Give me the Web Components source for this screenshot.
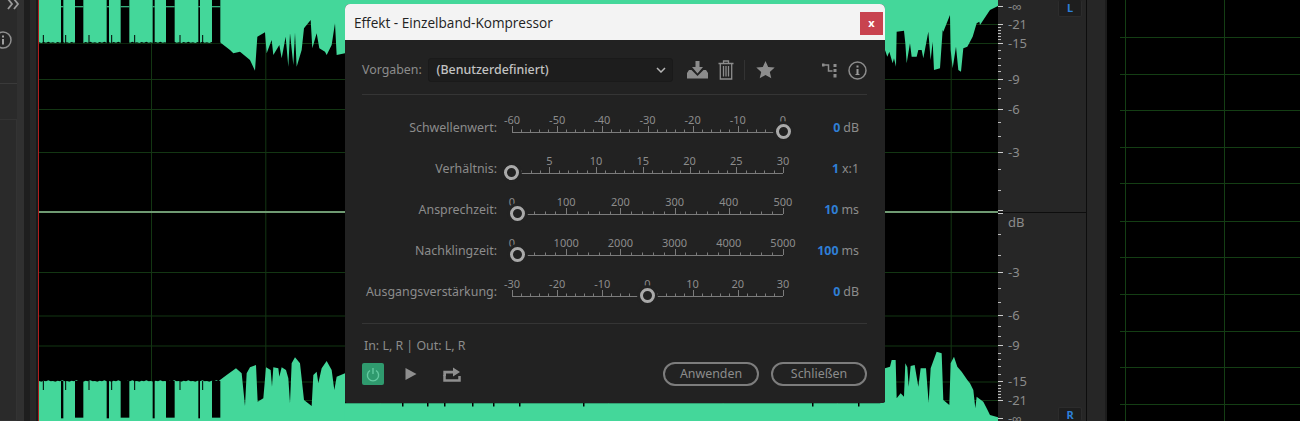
<!DOCTYPE html>
<html lang="de">
<head>
<meta charset="utf-8">
<title>Effekt - Einzelband-Kompressor</title>
<style>
  html, body { margin: 0; height: 100%; background: #000; overflow: hidden; }
</style>
</head>
<body>
<audition-view>
  <side-rail></side-rail>
  <wave-view></wave-view>
  <db-ruler></db-ruler>
  <rail-split></rail-split>
  <empty-track></empty-track>
  <effect-dialog title="Effekt - Einzelband-Kompressor">
    <fx-slider label="Schwellenwert:" value="0" unit="dB" scale="-60,-50,-40,-30,-20,-10,0" thumb="271"></fx-slider>
    <fx-slider label="Verhältnis:" value="1" unit="x:1" scale="5,10,15,20,25,30" lead="37.4" thumb="-1"></fx-slider>
    <fx-slider label="Ansprechzeit:" value="10" unit="ms" scale="0,100,200,300,400,500" thumb="5.4"></fx-slider>
    <fx-slider label="Nachklingzeit:" value="100" unit="ms" scale="0,1000,2000,3000,4000,5000" thumb="5.4"></fx-slider>
    <fx-slider label="Ausgangsverstärkung:" value="0" unit="dB" scale="-30,-20,-10,0,10,20,30" thumb="135.5"></fx-slider>
  </effect-dialog>
</audition-view>

<script>
class AuditionView extends HTMLElement {
  constructor() {
    super();
    this.attachShadow({mode: "open"}).innerHTML = `
    <style>
      :host { display: flex; position: relative; width: 1300px; height: 421px; overflow: hidden; background: #000; }
    </style>
    <slot></slot>`;
  }
}

class SideRail extends HTMLElement {
  constructor() {
    super();
    this.attachShadow({mode: "open"}).innerHTML = `
    <style>
      :host { display: flex; flex: 0 0 38px; height: 421px; background: #262626; }
      .panel { flex: 0 0 17px; display: flex; flex-direction: column; background: #2a2a2a; overflow: hidden; }
      .tools { height: 84px; box-sizing: border-box; border-bottom: 1px solid #3a3a3a; position: relative; }
      .tools svg { display: block; }
      .box { margin-top: 35px; flex: 1; border: 1px solid #333; border-left: 0; }
      .s1 { flex: 0 0 7px; background: #303030; }
      .s2 { flex: 0 0 6px; background: #1e1e1e; }
      .s3 { flex: 0 0 6px; background: #282828; }
      .s4 { flex: 0 0 2px; background: #1b1b1b; }
      .over { position: absolute; left: 0; top: 0; }
    </style>
    <div class="panel"><div class="tools"></div><div class="box"></div></div>
    <div class="s1"></div><div class="s2"></div><div class="s3"></div><div class="s4"></div>
    <svg class="over" width="38" height="60" viewBox="0 0 38 60">
      <path d="M8 -1l4 5-4 5M14 -1l4 5-4 5" fill="none" stroke="#9a9a9a" stroke-width="1.8"/>
      <circle cx="3" cy="40" r="8" fill="#262626" stroke="#8f8f8f" stroke-width="1.5"/>
      <rect x="2" y="39" width="2" height="5.5" fill="#a0a0a0"/><rect x="2" y="35.5" width="2" height="2" fill="#a0a0a0"/>
    </svg>`;
  }
}

// coordinates below come from the 3x crops, hence the scale(1/3)
const TOP_LEFT = "660,127 690,150 700,160 720,155 750,180 765,212 772,110 795,97 800,160 815,120 820,165 838,135 845,175 857,110 865,200 870,100 880,195 885,98 890,200 905,150 912,85 932,60 937,145 950,100 958,145 975,155 980,165 995,135 1005,70 1010,165 1035,160";
const TOP_RIGHT = "2655,150 2662,170 2668,155 2678,190 2682,175 2688,200 2690,95 2712,92 2716,130 2720,190 2730,130 2735,170 2750,170 2755,150 2765,150 2770,175 2785,95 2792,180 2798,125 2802,210 2820,205 2828,90 2830,95 2850,45 2852,150 2858,205 2868,140 2875,210 2883,215 2890,145 2902,140 2918,110 2930,70 2938,65 2940,75 2970,30 2994,18";
const BOT_LEFT = "660,300 680,285 708,265 725,280 735,378 740,280 750,262 768,255 773,365 790,355 798,262 812,270 816,320 820,262 835,265 838,290 845,262 858,270 865,295 870,370 875,250 885,232 900,250 912,360 935,378 940,285 950,275 955,310 965,265 980,243 995,270 1003,330 1010,290 1035,280";
const BOT_RIGHT = "2640,370 2655,365 2655,265 2670,260 2675,240 2687,240 2690,355 2702,340 2712,350 2716,250 2722,262 2726,320 2732,258 2744,255 2755,320 2762,265 2778,265 2786,368 2792,265 2810,215 2825,220 2830,360 2848,375 2852,250 2862,230 2872,260 2885,275 2902,300 2910,310 2920,330 2926,385 2930,350 2950,365 2960,385 2970,405 2994,412";
const GAPS = [[183,190],[225,250],[320,327],[362,388],[458,464],[498,524],[595,600],[636,661]];
const SPIKES = [130,197,267,335,404,540,608];

function flatEdge(y) {
  let pts = [];
  for (let x = 117, i = 0; x < 660; x += 7, i++) pts.push(x + "," + (y + [0,2,-1,1,-2,1][i % 6]));
  return pts.join(" ");
}

class WaveView extends HTMLElement {
  constructor() {
    super();
    const vx = [151, 265.3, 379.6, 494, 608.2, 722.6, 836.9, 950.7];
    const hy = [24, 43, 79, 109, 152, 272, 315.5, 345.5, 381.5, 400];
    const gaps = GAPS.map(g => `
      <rect x="${g[0]}" y="0" width="${g[1]-g[0]}" height="130" fill="#000"/>
      <rect x="${g[0]}" y="18" width="${g[1]-g[0]}" height="4" fill="#44d79a" opacity=".8"/>`).join("");
    const gapsLow = GAPS.map(g => `
      <rect x="${g[0]}" y="303" width="${g[1]-g[0]}" height="${g[1]-g[0] > 10 ? 110 : 112}" fill="#000"/>`).join("");
    const spikesTop = SPIKES.map(x => `<rect x="${x-1.5}" y="105" width="3" height="25" fill="#000"/>`).join("");
    const spikesLow = SPIKES.map(x => `<rect x="${x-1.5}" y="303" width="3" height="27" fill="#000"/>`).join("");
    const notches = [402, 427, 444, 472, 493, 519, 583, 812, 858];
    this.attachShadow({mode: "open"}).innerHTML = `
    <style>
      :host { display: block; flex: 0 0 960px; height: 421px; box-sizing: border-box; border-left: 1px solid #b01e1e; }
      svg { display: block; }
    </style>
    <svg width="959" height="421" viewBox="39 0 959 421">
      <rect x="39" y="0" width="959" height="421" fill="#000"/>
      ${vx.map(x => `<rect x="${x}" y="0" width="1" height="421" fill="#133613"/>`).join("")}
      ${hy.map(y => `<rect x="39" y="${y}" width="959" height="1" fill="#133613"/>`).join("")}
      <rect x="39" y="211" width="959" height="2" fill="#6f9a72"/>
      <g transform="scale(.33333)" fill="#44d79a">
        <polygon points="117,0 2994,0 ${TOP_RIGHT.split(" ").reverse().join(" ")} 2655,150 2000,150 1035,150 ${TOP_LEFT.split(" ").reverse().join(" ")} ${flatEdge(127).split(" ").reverse().join(" ")}"/>
        ${gaps}${spikesTop}
      </g>
      <g transform="translate(0,280) scale(.33333)" fill="#44d79a">
        <polygon points="117,423 117,303 ${flatEdge(303)} ${BOT_LEFT} 1035,423"/>
        <polygon points="1035,423 1035,370 2640,370 ${BOT_RIGHT} 2994,423"/>
        ${gapsLow}
        ${spikesLow}
        ${GAPS.filter(g => g[1]-g[0] > 10).map(g => `<rect x="${g[0]}" y="414" width="${g[1]-g[0]}" height="4" fill="#44d79a" opacity=".8"/>`).join("")}
      </g>
      ${notches.map(x => `<rect x="${x}" y="403" width="1.5" height="3.5" fill="#000"/>`).join("")}
    </svg>`;
  }
}

class DbRuler extends HTMLElement {
  constructor() {
    super();
    const marks = [["-∞",6],["-21",24],["-15",43],["-9",79],["-6",109],["-3",152],["dB",222],["-3",272],["-6",315],["-9",345],["-15",381],["-21",400],["-∞",418]];
    const minor = [27,30,33,36,39,50,58,65,71,88,98,122,136,169,190];
    const ticks = [...minor, ...minor.map(y => 424 - y)].map(y => `<rect x="0" y="${y}" width="3" height="1" fill="#bbb"/>`).join("")
      + [6,24,43,79,109,152,210,213,272,315,345,381,400,418].map(y => `<rect x="0" y="${y}" width="5" height="1" fill="#ccc"/>`).join("");
    this.attachShadow({mode: "open"}).innerHTML = `
    <style>
      :host { display: block; position: relative; flex: 0 0 89px; height: 421px; background: #262626; font: 13px "Noto Sans", sans-serif; color: #8b8b8b; }
      :host::after { content: ""; position: absolute; right: 0; top: 0; bottom: 0; width: 1px; background: #0d0d0d; }
      svg { position: absolute; left: 0; top: 0; }
      .split { position: absolute; left: 0; right: 0; top: 212px; height: 1px; background: #0d0d0d; }
      span { position: absolute; left: 10px; transform: translateY(-50%); line-height: 12px; }
      .ch { position: absolute; left: 60px; width: 24px; box-sizing: border-box; background: #1e1e1e; border: 1px solid #2c2c2c; border-radius: 2px; color: #2d7fd8; font-weight: 700; font-size: 11px; line-height: 14px; text-align: center; }
      .l { top: 0; height: 17px; border-top: 0; padding-top: 1px; }
      .r { top: 407px; height: 14px; border-bottom: 0; }
    </style>
    <div class="split"></div>
    <svg width="6" height="421">${ticks}</svg>
    ${marks.map(m => `<span style="top:${m[1]}px">${m[0]}</span>`).join("")}
    <div class="ch l">L</div><div class="ch r">R</div>`;
  }
}

class RailSplit extends HTMLElement {
  constructor() {
    super();
    this.attachShadow({mode: "open"}).innerHTML = `
    <style>
      :host { display: flex; flex: 0 0 33px; height: 421px; }
      div:nth-child(1) { flex: 0 0 13px; background: #1d1d1d; }
      div:nth-child(2) { flex: 0 0 18px; background: #262626; }
      div:nth-child(3) { flex: 0 0 2px; background: #1c1c1c; }
    </style>
    <div></div><div></div><div></div>`;
  }
}

class EmptyTrack extends HTMLElement {
  constructor() {
    super();
    const lines = [37,74,110,147,183,221,257,294,331,367,404].map(y => `<rect x="0" y="${y}" width="180" height="1" fill="#143e14"/>`).join("");
    this.attachShadow({mode: "open"}).innerHTML = `
    <style>:host { display: block; flex: 1; height: 421px; background: #000; } svg { display: block; }</style>
    <svg width="180" height="421">
      <rect x="5" y="0" width="1" height="421" fill="#143e14"/>
      <rect x="104" y="0" width="1" height="421" fill="#143e14"/>
      ${lines}
    </svg>`;
  }
}

class FxSlider extends HTMLElement {
  constructor() {
    super();
    this.attachShadow({mode: "open"});
  }
  connectedCallback() {
    const scale = this.getAttribute("scale").split(",");
    const lead = parseFloat(this.getAttribute("lead") || 0);
    const W = 271;
    let ticks = "";
    const n = lead ? 29 : (scale.length - 1) * 5;
    for (let i = 0; i <= n; i++) {
      const x = Math.round((W / n) * i) + .5;
      const major = lead ? ((i + 1) % 5 === 0 || i === 0) : i % 5 === 0;
      ticks += `<path d="M${x} ${major ? 1 : 4.5}V7"/>`;
    }
    this.shadowRoot.innerHTML = `
    <style>
      :host { display: grid; grid-template-columns: 135px 271px 1fr; column-gap: 15px; height: 41px; box-sizing: border-box; padding-top: 6px; font: 12.4px/16px "Noto Sans", sans-serif; color: #8c8c8c; }
      .label { text-align: right; margin-top: 8px; white-space: nowrap; }
      .track { position: relative; }
      .scale { display: flex; justify-content: space-between; height: 13px; padding-left: ${lead}px; font-size: 11px; line-height: 15px; }
      .scale span { flex: 0 0 0; width: 0; min-width: 0; display: flex; justify-content: center; white-space: nowrap; }
      svg { display: block; overflow: visible; }
      svg path { stroke: #7c7c7c; stroke-width: 1; fill: none; }
      .thumb { position: absolute; top: 12px; left: ${parseFloat(this.getAttribute("thumb")) - 7.5}px; width: 15px; height: 15px; box-sizing: border-box; border: 3px solid #a9a9a9; border-radius: 50%; background: #222; box-shadow: 0 0 0 3px #222; }
      .value { text-align: right; margin: 8px 8px 0 0; white-space: nowrap; }
      b { color: #2f7fd6; font-weight: 700; margin-right: 3px; }
    </style>
    <div class="label">${this.getAttribute("label")}</div>
    <div class="track">
      <div class="scale">${scale.map(s => `<span>${s}</span>`).join("")}</div>
      <svg width="${W}" height="8"><path d="M0 7.5H${W}"/>${ticks}</svg>
      <div class="thumb"></div>
    </div>
    <div class="value"><b>${this.getAttribute("value")}</b>${this.getAttribute("unit")}</div>`;
  }
}

class EffectDialog extends HTMLElement {
  constructor() {
    super();
    this.attachShadow({mode: "open"});
  }
  connectedCallback() {
    this.shadowRoot.innerHTML = `
    <style>
      :host { display: block; position: absolute; left: 345px; top: 4px; width: 540px; height: 399px; background: #222; border-radius: 5px 5px 2px 2px; overflow: hidden; font: 12.4px/16px "Noto Sans", sans-serif; color: #8c8c8c; }
      .bar { display: flex; align-items: center; justify-content: space-between; height: 36px; background: #f3f3f3; padding: 0 2px 0 9px; }
      .bar span { font: 13.6px "Open Sans", "Noto Sans", sans-serif; color: #222; }
      .close { width: 23px; height: 23px; background: #c8434f; color: #fff; font: 700 11px/22px "Noto Sans", sans-serif; text-align: center; margin-top: 3px; }
      .body { padding: 18px 18px 0 17px; }
      .presets { display: flex; align-items: center; height: 24px; }
      .presets label { width: 66px; white-space: nowrap; }
      .select { display: flex; align-items: center; justify-content: space-between; width: 247px; height: 24px; box-sizing: border-box; background: #1d1d1d; border: 1px solid #1a1a1a; border-radius: 3px; padding: 0 6px 0 8px; color: #c2c2c2; font-weight: 500; }
      .presets svg { display: block; flex: none; }
      .tool { fill: #8c8c8c; }
      .div { width: 1px; height: 20px; background: #333; margin: 0 11px 0 10px; }
      .sep { height: 1px; background: #353535; margin-top: 12px; }
      .rows { padding-top: 11px; }
      .sep2 { height: 1px; background: #353535; margin-top: 12px; }
      .io { margin: 14px 0 0 2px; height: 16px; }
      .foot { display: flex; align-items: center; margin-top: 8px; height: 24px; }
      .power { display: flex; align-items: center; justify-content: center; width: 22px; height: 22px; background: #2f9a6e; border-radius: 2px; }
      .foot .play { margin-left: 21px; }
      .foot .send { margin-left: 26px; margin-right: auto; }
      button { height: 24px; width: 96px; box-sizing: border-box; padding: 0; background: transparent; border: 2px solid #7d7d7d; border-radius: 12px; font: inherit; color: #8c8c8c; }
      button + button { margin-left: 12px; }
    </style>
    <div class="bar"><span>${this.getAttribute("title")}</span><div class="close">x</div></div>
    <div class="body">
      <div class="presets">
        <label>Vorgaben:</label>
        <div class="select">(Benutzerdefiniert)
          <svg width="10" height="6" viewBox="0 0 10 6"><path d="M1 1l4 4 4-4" fill="none" stroke="#b5b5b5" stroke-width="1.5"/></svg>
        </div>
        <svg class="tool" style="margin-left:14px" width="21" height="18" viewBox="0 0 21 18"><path d="M8.5 0h4v6h3.500l-5.500 6.500L5 6h3.500z"/><path d="M0 17.500V12l2-3h2.500l6 6 6-6H19l2 3v5.500z"/></svg>
        <svg style="margin-left:10px" width="16" height="20" viewBox="0 0 16 20" fill="none" stroke="#8c8c8c" stroke-width="1.300"><path d="M.5 3.500h15M5.500 3.500V1h5v2.500"/><path d="M2.300 3.500V19h11.400V3.500"/><path d="M5.500 6v10.500M8 6v10.500M10.500 6v10.500"/></svg>
        <div class="div"></div>
        <svg class="tool" width="19" height="18" viewBox="0 0 19 18"><path d="M9.500 0l2.700 6 6.500.6-4.900 4.300 1.500 6.400-5.800-3.400-5.800 3.400 1.500-6.400L.3 6.600 6.800 6z"/></svg>
        <svg style="margin-left:47px" width="15" height="15" viewBox="0 0 15 15"><path d="M1 2h5.500v6h4" fill="none" stroke="#8c8c8c" stroke-width="1.500"/><rect x="0" y="0.500" width="2.500" height="3" fill="#8c8c8c"/><rect x="11.500" y="1" width="3" height="3" fill="#8c8c8c"/><rect x="11.500" y="6" width="3" height="3" fill="#8c8c8c"/><rect x="11.500" y="11" width="3" height="3.500" fill="#8c8c8c"/></svg>
        <svg style="margin-left:11px" width="19" height="19" viewBox="0 0 19 19"><circle cx="9.500" cy="9.500" r="8.500" fill="none" stroke="#8c8c8c" stroke-width="1.500"/><rect x="8.500" y="8" width="2" height="6" fill="#9a9a9a"/><rect x="7.500" y="13" width="4" height="1" fill="#9a9a9a"/><rect x="8.500" y="4.500" width="2" height="2" fill="#9a9a9a"/></svg>
      </div>
      <div class="sep"></div>
      <div class="rows"><slot></slot></div>
      <div class="sep2"></div>
      <div class="io">In: L, R | Out: L, R</div>
      <div class="foot">
        <div class="power"><svg width="14" height="15" viewBox="0 0 14 15" fill="none" stroke="#63c9a0" stroke-width="1.400"><path d="M4 3.500a5.600 5.600 0 1 0 6 0"/><path d="M7 1v6"/></svg></div>
        <svg class="play" width="12" height="12" viewBox="0 0 12 12"><path d="M.500 0L11.500 6 .500 12z" fill="#8f8f8f"/></svg>
        <svg class="send" width="18" height="15" viewBox="0 0 18 15"><path d="M1.500 8V13.500H16.500V9" fill="none" stroke="#8f8f8f" stroke-width="2.500"/><path d="M.3 9V3.800H10V.5L17 5l-7 4.500V6.500H3V9z" fill="#8f8f8f"/></svg>
        <button>Anwenden</button><button>Schließen</button>
      </div>
    </div>`;
  }
}

customElements.define("audition-view", AuditionView);
customElements.define("side-rail", SideRail);
customElements.define("wave-view", WaveView);
customElements.define("db-ruler", DbRuler);
customElements.define("rail-split", RailSplit);
customElements.define("empty-track", EmptyTrack);
customElements.define("fx-slider", FxSlider);
customElements.define("effect-dialog", EffectDialog);
</script>
</body>
</html>
